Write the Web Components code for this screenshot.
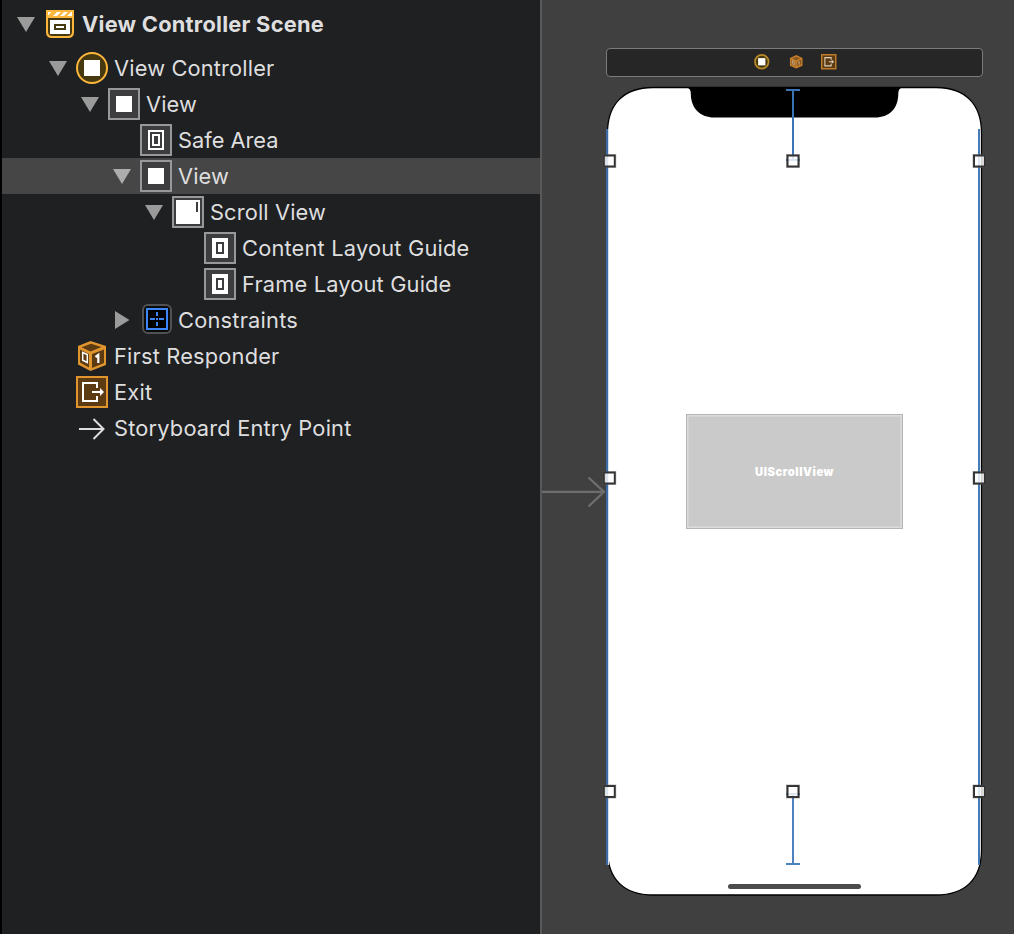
<!DOCTYPE html>
<html lang="en">
<head>
<meta charset="utf-8">
<title>Storyboard</title>
<style>
html, body { margin: 0; height: 100%; background: #404040; overflow: hidden; }
body { font-family: Inter, "Liberation Sans", sans-serif; }
</style>
</head>
<body>
<story-editor>
  <outline-tree slot="outline">
    <outline-row kind="scene" level="0" open="down" w="241" strong>View Controller Scene</outline-row>
    <outline-row kind="controller" level="1" open="down" w="159.5">View Controller</outline-row>
    <outline-row kind="view" level="2" open="down" w="50">View</outline-row>
    <outline-row kind="safe" level="3" w="99.5">Safe Area</outline-row>
    <outline-row kind="view" level="3" open="down" w="50" selected>View</outline-row>
    <outline-row kind="scroll" level="4" open="down" w="115">Scroll View</outline-row>
    <outline-row kind="guide" level="5" w="226.5">Content Layout Guide</outline-row>
    <outline-row kind="guide" level="5" w="208.5">Frame Layout Guide</outline-row>
    <outline-row kind="constraints" level="3" open="right" w="119">Constraints</outline-row>
    <outline-row kind="responder" level="1" w="164.5">First Responder</outline-row>
    <outline-row kind="exit" level="1" w="37.5">Exit</outline-row>
    <outline-row kind="entry" level="1" w="236.5">Storyboard Entry Point</outline-row>
  </outline-tree>
  <scene-canvas slot="canvas">
    <scene-dock></scene-dock>
    <device-frame><view-placeholder>UIScrollView</view-placeholder></device-frame>
  </scene-canvas>
</story-editor>
<script>
const ICONS = {
  scene: `<path d="M2 2h28v22q0 6-6 6H8q-6 0-6-6z" fill="#fbb63c"/><path d="M4 10h24v13.500q0 4.500-4.500 4.500h-15q-4.500 0-4.500-4.500z" fill="#46390f"/>
    <g fill="#fff"><path d="M4 4h3.500L4 7.500zM9 8l4-4h4l-4 4zM16 8l4-4h4l-4 4zM23 8l4-4h1v4z"/></g><path d="M6 12h20v14H6z" fill="#fff"/><path d="M10 16h12v6H10z" fill="#46390f"/><path d="M12 18h8v2h-8z" fill="#fff"/>`,
  controller: `<circle cx="16" cy="16" r="15" fill="#46390f" stroke="#fbb63c" stroke-width="2"/><path d="M8 8h16v16H8z" fill="#fff"/>`,
  view: `<rect x="1" y="1" width="30" height="30" fill="#3d3d3f" stroke="#98989a" stroke-width="2"/><path d="M8 8h16v16H8z" fill="#fff"/>`,
  safe: `<rect x="1" y="1" width="30" height="30" fill="#3d3d3f" stroke="#98989a" stroke-width="2"/><g fill="none" stroke="#fff" stroke-width="2"><path d="M9 7h14v18H9zM13 11h6v10h-6z"/></g>`,
  scroll: `<rect x="1" y="1" width="30" height="30" fill="#3d3d3f" stroke="#98989a" stroke-width="2"/><path d="M4 4h24v24H4z" fill="#fff"/><path d="M24 6h2v10h-2z" fill="#3d3d3f"/>`,
  guide: `<rect x="1" y="1" width="30" height="30" fill="#3d3d3f" stroke="#98989a" stroke-width="2"/><path d="M8 6h16v20H8z" fill="#fff"/><path d="M12 10h8v12h-8z" fill="#3d3d3f"/><path d="M14 12h4v8h-4z" fill="#fff"/>`,
  constraints: `<rect x="3" y="1" width="28" height="28" rx="5" fill="#0b0b0c" stroke="#515154" stroke-width="2"/><rect x="7" y="5" width="20" height="20" fill="#000" stroke="#3c86f7" stroke-width="2"/><path d="M17 8v4M17 14v2M17 18v4M10 15h5M16 15h2M19 15h5" stroke="#3c86f7" stroke-width="2"/>`,
  responder: `<path d="M14.500 1L30 6v19L14.500 31 2 24.500V6z" fill="#e0952f"/><path d="M15 3.800L25.500 7 14.500 11.500 5.500 7.200zM4 9.500L13 14v13.500L4 22.500zM16 14l12-4.500V23l-12 5z" fill="#5c3b12"/><path d="M6.700 12.500l4.600 2v8l-4.600-2.300z" fill="none" stroke="#fff" stroke-width="1.500"/><path d="M19.500 17l2.800-2v8" fill="none" stroke="#fff" stroke-width="2.200"/>`,
  exit: `<rect x="1" y="1" width="30" height="30" fill="#5c3b12" stroke="#e0952f" stroke-width="2"/><path d="M21 12V7H7v18h14v-5M16 16h10" fill="none" stroke="#fff" stroke-width="2"/><path d="M24 12l4 4-4 4z" fill="#fff"/>`,
  entry: `<path d="M3 17h24M17.500 7l10 10-10 10" fill="none" stroke="#dededf" stroke-width="2"/>`
};
const DOCK_ICONS = [
  `<circle cx="16" cy="16" r="14" fill="#46390f" stroke="#b98a26" stroke-width="3.500"/><path d="M8.500 8.500h15v15h-15z" fill="#fff"/>`,
  `<path d="M17 2L30 8v16L17 30 4 24V8z" fill="#c17c2b"/><path d="M17 6l8 3-8 4-8-4zM7 12l8 4v9l-8-4zM19 16l8-4v9l-8 4z" fill="#855620"/><path d="M9 14l4 2v6l-4-2zM21 17l2-1v6" fill="none" stroke="#c9ac86" stroke-width="2"/>`,
  `<rect x="1.500" y="1.500" width="29" height="29" fill="#5c3b12" stroke="#bd7c2a" stroke-width="3"/><path d="M21 12V7.500H8v17h13V20M16 16h10" fill="none" stroke="#ddd0c0" stroke-width="2.200"/><path d="M22 12l5 4-5 4z" fill="#ddd0c0"/>`
];

class StoryEditor extends HTMLElement {
  connectedCallback() {
    this.attachShadow({ mode: 'open' }).innerHTML = `<style>
      :host { display: grid; grid-template-columns: 542px 1fr; width: 1014px; height: 934px; overflow: hidden; }
    </style><slot name="outline"></slot><slot name="canvas"></slot>`;
  }
}
class OutlineTree extends HTMLElement {
  connectedCallback() {
    this.attachShadow({ mode: 'open' }).innerHTML = `<style>
      :host { display: flex; flex-direction: column; box-sizing: border-box; height: 934px; padding-top: 6px;
        background: #1f2022; border-left: 2px solid #000; border-right: 2px solid #595959; }
    </style><slot></slot>`;
  }
}
class OutlineRow extends HTMLElement {
  connectedCallback() {
    const level = +this.getAttribute('level'), open = this.getAttribute('open');
    const tri = open === 'down' ? '<path d="M0 2h18L9 17z"/>' : open === 'right' ? '<path d="M2 0v18l14.500-9z"/>' : '';
    this.attachShadow({ mode: 'open' }).innerHTML = `<style>
      :host { display: flex; flex: none; align-items: center; height: 36px; box-sizing: border-box;
        padding-left: ${15 + level * 32}px; color: #dededf; font-size: 21.800px; font-weight: 430; line-height: 36px; white-space: nowrap; }
      :host([strong]) { font-weight: 650; margin-bottom: 8px; }
      :host([selected]) { background: #464646; }
      svg { display: block; flex: none; }
      .tri { fill: #9b9b9b; margin-right: 9px; }
      :host([selected]) .tri { fill: #adadad; }
      .icon { margin-right: 6px; }
    </style><svg class="tri" width="18" height="18">${tri}</svg>
    <svg class="icon" width="32" height="32">${ICONS[this.getAttribute('kind')]}</svg><span><slot></slot></span>`;
    const label = this.shadowRoot.querySelector('span');
    const spare = +this.getAttribute('w') + 1 - label.getBoundingClientRect().width;
    label.style.letterSpacing = spare / this.textContent.length + 'px';
  }
}
class SceneCanvas extends HTMLElement {
  connectedCallback() {
    this.attachShadow({ mode: 'open' }).innerHTML = `<style>
      :host { display: flex; flex-direction: column; gap: 10px; box-sizing: border-box; height: 934px;
        padding: 48px 0 0 64px; background: #404040; position: relative; }
      svg { position: absolute; left: 0; top: 474px; }
    </style><svg width="66" height="36"><path d="M0 17.800h62M46.500 3.500l15.500 14.300-15.500 14.700" fill="none" stroke="#6e6e6e" stroke-width="2.300"/></svg><slot></slot>`;
  }
}
class SceneDock extends HTMLElement {
  connectedCallback() {
    this.attachShadow({ mode: 'open' }).innerHTML = `<style>
      :host { display: flex; flex: none; align-items: center; justify-content: center; gap: 18px; width: 377px; height: 29px;
        box-sizing: border-box; border: 1px solid #7b7b7b; border-radius: 4px; background: #262626; padding: 0 0 1px 2px; }
      svg { display: block; }
    </style>` + DOCK_ICONS.map(art => `<svg width="15.500" height="15.500" viewBox="0 0 32 32">${art}</svg>`).join('');
  }
}
class DeviceFrame extends HTMLElement {
  connectedCallback() {
    const handles = [[609.300,161],[793,161],[979.500,161],[609.300,478],[979.500,478],[609.300,791.500],[793,791.500],[979.500,791.500]];
    this.attachShadow({ mode: 'open' }).innerHTML = `<style>
      :host { display: flex; flex: none; box-sizing: border-box; justify-content: center; align-items: flex-start;
        width: 377px; height: 809px; padding-top: 327px; position: relative; }
      svg { position: absolute; left: 0; top: 0; overflow: visible; }
      slot { display: block; position: relative; }
    </style>
    <svg width="377" height="809" viewBox="606 87 377 809">
      <path d="M653 87.500H936C965 87.500 981.500 104 981.500 133V850C981.500 879 965 895 936 895H653C624 895 607.500 879 607.500 850V133C607.500 104 624 87.500 653 87.500Z" fill="#fff" stroke="#000" stroke-width="1.300"/>
      <path d="M686 87.500Q690.800 88 690.800 93.500C690.800 109 701 117.500 714 117.500H875C889 117.500 898.300 109 898.300 93.500Q898.300 88 903 87.500Z"/>
      <rect x="728" y="884" width="133" height="5" rx="2.500" fill="#4c4c4c"/>
      <g fill="none" stroke="#447cb9" stroke-width="2">
        <path d="M607 129V865" stroke="#3c6ca5"/><path d="M608.500 129V865" stroke="#d5dff0" stroke-width="1"/><path d="M979 129V865"/>
        <path d="M793 90V160M786 90H800M786 160H800" stroke="#3b74b5"/><path d="M793 794V864M786 794H800M786 864H800" stroke="#4b83bf"/>
      </g>
      ${handles.map(([x, y]) => `<rect x="${x - 5.500}" y="${y - 5.500}" width="11" height="11" fill="#fff" fill-opacity=".82" stroke="#333" stroke-width="2"/><rect x="${x - 6.500}" y="${y - 6.500}" width="13" height="13" fill="none" stroke="#555" stroke-opacity=".5" stroke-width=".8"/>`).join('')}
    </svg><slot></slot>`;
  }
}
class ViewPlaceholder extends HTMLElement {
  connectedCallback() {
    this.attachShadow({ mode: 'open' }).innerHTML = `<style>
      :host { display: flex; align-items: center; justify-content: center; box-sizing: border-box; width: 217px; height: 115px;
        background: #cacaca; border: 1px solid #b4b4b4; box-shadow: inset 0 0 0 1.500px #dcdcdc;
        color: #fff; font-size: 11.200px; font-weight: 900; letter-spacing: .55px; }
    </style><slot></slot>`;
  }
}
customElements.define('story-editor', StoryEditor);
customElements.define('outline-tree', OutlineTree);
customElements.define('outline-row', OutlineRow);
customElements.define('scene-canvas', SceneCanvas);
customElements.define('scene-dock', SceneDock);
customElements.define('device-frame', DeviceFrame);
customElements.define('view-placeholder', ViewPlaceholder);
</script>
</body>
</html>
